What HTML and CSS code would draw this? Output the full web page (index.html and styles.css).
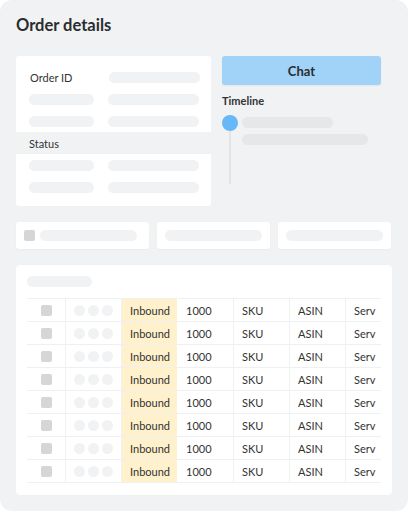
FILE: index.html
```html
<!DOCTYPE html>
<html>
<head>
    <title>Order details</title>
    <link rel="stylesheet" href="styles.css">
</head>
<body>
    <div class="page">
        <h1>Order details</h1>

        <!-- Info card + chat/timeline -->
        <div class="top">
            <div class="info-card">
                <div class="info-row"><span class="label">Order ID</span><span class="pill pill-value"></span></div>
                <div class="info-row"><span class="pill pill-key"></span><span class="pill pill-value"></span></div>
                <div class="info-row"><span class="pill pill-key"></span><span class="pill pill-value"></span></div>
                <div class="info-row section">Status</div>
                <div class="info-row"><span class="pill pill-key"></span><span class="pill pill-value"></span></div>
                <div class="info-row"><span class="pill pill-key"></span><span class="pill pill-value"></span></div>
            </div>

            <div class="side">
                <button class="chat-btn">Chat</button>
                <div class="timeline-title">Timeline</div>
                <div class="timeline">
                    <div class="track">
                        <span class="dot"></span>
                        <span class="line"></span>
                    </div>
                    <div class="events">
                        <span class="pill dark pill-short"></span>
                        <span class="pill dark pill-long"></span>
                    </div>
                </div>
            </div>
        </div>

        <!-- Small summary cards -->
        <div class="stats">
            <div class="stat first"><span class="box"></span><span class="pill pill-stat"></span></div>
            <div class="stat"><span class="pill pill-stat"></span></div>
            <div class="stat"><span class="pill pill-stat"></span></div>
        </div>

        <!-- Items table -->
        <div class="table-card">
            <div class="pill pill-heading"></div>
            <div class="table-wrap">
                <table>
                    <tbody id="rows"></tbody>
                </table>
            </div>
        </div>
    </div>

    <script>
        var rows = document.getElementById("rows");
        for (var i = 0; i < 8; i++) {
            var tr = document.createElement("tr");
            tr.innerHTML =
                '<td class="c-check"><span class="box"></span></td>' +
                '<td class="c-dots"><span class="circle"></span><span class="circle"></span><span class="circle"></span></td>' +
                '<td class="c-type">Inbound</td>' +
                '<td>1000</td>' +
                '<td>SKU</td>' +
                '<td>ASIN</td>' +
                '<td>Serv</td>';
            rows.appendChild(tr);
        }
    </script>
</body>
</html>
```

FILE: styles.css
```css
body {
    margin: 0;
    background: #fff;
    font-family: Lato, "Open Sans", sans-serif;
    color: #333;
}

.page {
    box-sizing: border-box;
    width: 408px;
    height: 511px;
    padding: 15px 16px 0 16px;
    background: #f1f2f4;
    border-radius: 12px;
}

h1 {
    margin: 0 0 21px 0;
    font-size: 16.5px;
    line-height: 20px;
    font-weight: 700;
    color: #2b2c2f;
}

/* Skeleton pills */
.pill {
    display: block;
    height: 11px;
    border-radius: 6px;
    background: #f1f2f4;
}

.pill.dark {
    background: #e6e7e9;
}

.box {
    display: block;
    width: 11px;
    height: 11px;
    border-radius: 2px;
    background: #d5d6d8;
}

/* Top area */
.top {
    display: flex;
    gap: 11px;
}

.info-card {
    width: 195px;
    height: 150px;
    box-sizing: border-box;
    padding-top: 10px;
    background: #fff;
    border-radius: 3px;
}

.info-row {
    display: flex;
    align-items: center;
    height: 22px;
    padding-left: 13px;
    font-size: 11px;
}

.info-row .label {
    width: 79px;
    padding-left: 1px;
}

.pill-key {
    width: 65px;
    margin-right: 14px;
}

.pill-value {
    width: 91px;
}

.info-row.section {
    background: #f1f2f4;
}

.side {
    width: 159px;
}

.chat-btn {
    display: block;
    width: 100%;
    height: 29px;
    border: none;
    border-radius: 3px;
    background: #a1d3f8;
    box-shadow: 0 1px 2px rgba(0, 0, 0, 0.06);
    font-family: inherit;
    font-size: 13px;
    font-weight: 700;
    color: #2b2c2f;
}

.timeline-title {
    margin-top: 10px;
    font-size: 11px;
    line-height: 12px;
    font-weight: 700;
}

.timeline {
    display: flex;
    gap: 4px;
    margin-top: 8px;
}

.track {
    display: flex;
    flex-direction: column;
    align-items: center;
    width: 16px;
}

.dot {
    width: 16px;
    height: 16px;
    border-radius: 50%;
    background: #66b8f9;
}

.line {
    width: 2px;
    height: 53px;
    background: #e3e4e6;
}

.events {
    padding-top: 2px;
}

.pill-short {
    width: 91px;
}

.pill-long {
    width: 126px;
    margin-top: 6px;
}

/* Summary cards */
.stats {
    display: flex;
    gap: 8px;
    margin-top: 16px;
}

.stat {
    display: flex;
    align-items: center;
    gap: 5px;
    box-sizing: border-box;
    width: 113px;
    height: 27px;
    padding: 0 8px;
    background: #fff;
    border-radius: 3px;
    box-shadow: 0 1px 2px rgba(0, 0, 0, 0.03);
}

.stat.first {
    width: 133px;
}

.pill-stat {
    width: 97px;
}

/* Table card */
.table-card {
    box-sizing: border-box;
    height: 230px;
    margin-top: 16px;
    padding: 11px;
    background: #fff;
    border-radius: 4px;
}

.pill-heading {
    width: 65px;
    margin-bottom: 11px;
}

.table-wrap {
    overflow: hidden;
}

table {
    border-collapse: collapse;
    table-layout: fixed;
    width: 375px;
    font-size: 11px;
}

tr {
    height: 23px;
}

td {
    width: 47px;
    padding: 0 0 0 8px;
    border-top: 1px solid #eff0f2;
    border-bottom: 1px solid #eff0f2;
    border-right: 1px solid #eff0f2;
    white-space: nowrap;
}

td.c-check {
    width: 38px;
    padding: 0;
}

td.c-check .box {
    margin: 0 auto;
}

td.c-dots {
    font-size: 0;
}

.circle {
    display: inline-block;
    width: 11px;
    height: 11px;
    margin-right: 3px;
    border-radius: 50%;
    background: #f1f2f4;
    vertical-align: middle;
}

td.c-type {
    background: #fff1cc;
    border-right: 1px solid #fff;
}
```
